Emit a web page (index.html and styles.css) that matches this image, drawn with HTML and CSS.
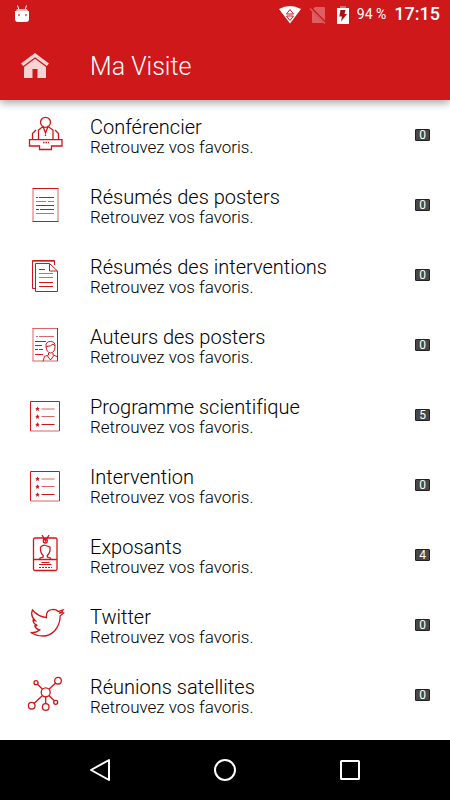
FILE: index.html
```html
<!DOCTYPE html>
<html lang="fr">
<head>
<meta charset="utf-8">
<meta name="viewport" content="width=device-width, initial-scale=1">
<title>Ma Visite</title>
<link rel="stylesheet" href="styles.css">
</head>
<body>
<header class="top">
  <div class="status">
    <svg class="status-bot" width="16" height="20" viewBox="0 0 16 20" aria-hidden="true">
      <path d="M3.500 0.500 5 5M12.500 0.500 11 5" stroke="#fff" stroke-width="1"/>
      <path d="M3 4h10l1.500 3H1.500z" fill="#f4bcbc"/>
      <path d="M1 6h14v8q0 3-3 3H4q-3 0-3-3z" fill="#fff"/>
      <path d="M4 9h2v2H4zM11 9h2v2h-2z" fill="#e57a7a"/>
    </svg>
    <svg width="22" height="20" viewBox="0 0 22 20" aria-hidden="true">
      <path d="M0 4Q11-2 22 4L11 18.500z" fill="#fff"/>
      <path d="M11 4.500 14.500 9H7.500zM7.500 11h7L11 15.500z" fill="#fff" stroke="#ce181a"/>
    </svg>
    <svg class="status-sim" width="18" height="20" viewBox="0 0 18 20" aria-hidden="true">
      <path d="M6 2h9q1 0 1 1v14l-1 1H4q-1 0-1-1V5z" fill="#dd5f61"/>
      <path d="M1 2.500 17 18.500" stroke="#ce181a" stroke-width="3"/>
      <path d="M1 3.500 16 18.500" stroke="#dd5f61" stroke-width="1.500"/>
    </svg>
    <svg class="status-battery" width="14" height="20" viewBox="0 0 14 20" aria-hidden="true">
      <path d="M4 1h6v2H4z" fill="#e06a6c"/>
      <path d="M1 3h12v16H1z" fill="#fff"/>
      <path d="M4.500 5h5L8.500 9H11L5 16.500 6 11.500H3.300z" fill="#a80f12"/>
    </svg>
    <span class="status-percent">94 %</span>
    <span class="status-time">17:15</span>
  </div>
  <div class="bar">
    <button class="home" type="button" aria-label="Accueil">
      <svg width="28" height="26" viewBox="0 0 28 26" aria-hidden="true">
        <path d="M14 0 28 10.500 25.800 13 14 4.200 2.200 13 0 10.500z"/>
        <path d="M14 5.800 25 14v11h-8.500v-9h-5v9H3V14z"/>
      </svg>
    </button>
    <h1>Ma Visite</h1>
  </div>
</header>

<main>
  <ul class="list">
    <li><a class="row" href="#conferencier">
      <svg class="icon" viewBox="0 0 40 40" aria-hidden="true">
        <g class="bold">
        <circle cx="20.500" cy="7.300" r="5"/>
        <path d="M4.500 24.700h32.500v6.300H26.500v3.500h-12V31h-10zM13.500 24.500V15l4.500-3.500 2.500 6.500 2.500-6.500 5 3.500v9.500M7.500 24.500v-6l3.500-3.500M33.500 24.500v-6L30 15"/>
        <path d="M20.500 19.500v2.500M18 27.500h6" stroke-dasharray="1.500 1"/>
        </g>
      </svg>
      <span class="text"><span class="title">Conférencier</span><span class="sub">Retrouvez vos favoris.</span></span>
      <span class="count">0</span></a></li>
    <li><a class="row" href="#resumes-posters">
      <svg class="icon" viewBox="0 0 40 40" aria-hidden="true">
        <path class="soft" d="M8 3.500v33M33 3.500v33"/>
        <path d="M7.500 3.500h26M7.500 36.500h26M11 12.500h2M14 12.500h15M11 20.500h18M11 24.500h3M15 24.500h14"/>
        <path class="soft" d="M11 16.500h10M23 16.500h6M11 28.500h18"/>
      </svg>
      <span class="text"><span class="title">Résumés des posters</span><span class="sub">Retrouvez vos favoris.</span></span>
      <span class="count">0</span></a></li>
    <li><a class="row" href="#resumes-interventions">
      <svg class="icon" viewBox="0 0 40 40" aria-hidden="true">
        <path d="M10.500 33.500h-3v-28h22V10M10.500 8.500h14l8 7.500v20.500h-22zM24.500 8.500V16h8M14 14.500h6M14 27.500h14M14 31.500h14"/>
        <path class="soft" d="M14 18.500h14M14 22.500h14M8 6.500h21"/>
      </svg>
      <span class="text"><span class="title">Résumés des interventions</span><span class="sub">Retrouvez vos favoris.</span></span>
      <span class="count">0</span></a></li>
    <li><a class="row" href="#auteurs">
      <svg class="icon" viewBox="0 0 40 40" aria-hidden="true">
        <path class="soft" d="M8 3v33M7.500 36h25.500M7.500 3.500h25.500M11 11.500h2M14 11.500h15"/>
        <path d="M32.500 3v33M10 16.500h11M10 20.500h7M10 24.500h3M14 24.500h4M10 29.500h8"/>
        <path d="M21 21.500q-.5-5 4.500-5t4.500 5q0 6-4.500 6.500-4-.5-4.500-6.500zM21 21.500q5 0 7-2.500l2 2M23.500 28v2l-4 1.500-1.500 5M28 28v2l4 1.500M22.500 31l3 4 3-4"/>
      </svg>
      <span class="text"><span class="title">Auteurs des posters</span><span class="sub">Retrouvez vos favoris.</span></span>
      <span class="count">0</span></a></li>
    <li><a class="row" href="#programme">
      <svg class="icon" viewBox="0 0 40 40" aria-hidden="true">
        <path d="M5.500 36V6.500h29V36"/>
        <path class="soft" d="M5.500 36h29M16.500 14h13M16.500 21.500h13"/>
        <path d="M16.500 29.500h13"/>
        <path class="solid" d="m12.500 11.500.7 1.500 1.500.2-1.100 1.100.3 1.700-1.400-.8-1.400.8.3-1.700-1.100-1.100 1.500-.2zM12.500 19.300l.7 1.500 1.500.2-1.100 1.100.3 1.700-1.400-.8-1.400.8.3-1.700-1.100-1.100 1.500-.2zM12.500 27.200l.7 1.500 1.500.2-1.100 1.100.3 1.700-1.400-.8-1.400.8.3-1.700-1.100-1.100 1.500-.2z"/>
      </svg>
      <span class="text"><span class="title">Programme scientifique</span><span class="sub">Retrouvez vos favoris.</span></span>
      <span class="count">5</span></a></li>
    <li><a class="row" href="#intervention">
      <svg class="icon" viewBox="0 0 40 40" aria-hidden="true">
        <path d="M5.500 36V6.500h29V36"/>
        <path class="soft" d="M5.500 36h29M16.500 14h13M16.500 21.500h13"/>
        <path d="M16.500 29.500h13"/>
        <path class="solid" d="m12.500 11.500.7 1.500 1.500.2-1.100 1.100.3 1.700-1.400-.8-1.400.8.3-1.700-1.100-1.100 1.500-.2zM12.500 19.300l.7 1.500 1.500.2-1.100 1.100.3 1.700-1.400-.8-1.400.8.3-1.700-1.100-1.100 1.500-.2zM12.500 27.200l.7 1.500 1.500.2-1.100 1.100.3 1.700-1.400-.8-1.400.8.3-1.700-1.100-1.100 1.500-.2z"/>
      </svg>
      <span class="text"><span class="title">Intervention</span><span class="sub">Retrouvez vos favoris.</span></span>
      <span class="count">0</span></a></li>
    <li><a class="row" href="#exposants">
      <svg class="icon" viewBox="0 0 40 40" aria-hidden="true">
        <g class="bold">
        <rect x="8.500" y="3" width="23.500" height="32.500" rx="1.500"/>
        <circle cx="20.300" cy="6" r="2"/>
        <path d="M17 0l3.500 6L24 0M8.500 24.500H32"/>
        <path d="M15.500 12q3-2.500 5-1.500l4.500 1.500q.5 6-2.700 8.500v1.500l3 1 .7 1.500M15.500 12q-.5 6 2.700 8.500V22l-3 1-.7 1.500"/>
        </g>
        <path d="M16.500 27.500h8M14 29.500h12.500"/>
        <path d="M14 32.500h13" stroke-dasharray="2 1"/>
      </svg>
      <span class="text"><span class="title">Exposants</span><span class="sub">Retrouvez vos favoris.</span></span>
      <span class="count">4</span></a></li>
    <li><a class="row" href="#twitter">
      <svg class="icon" viewBox="0 0 40 40" aria-hidden="true">
        <g class="bold">
        <path d="M7.500 5Q13 11.500 21.500 12.700 20.500 4.500 28.500 4.300q2.800 0 4.700 2.200L38 5l-1.500 2.500 2.200.5-3.500 2.800C35 23 27 31 18 31 11 31 8 29 5.700 27.500q5.500.500 9-2.500-4-1-5-4.200l2.600-.3Q8.300 19 8 15.300l2.300.4Q5 11 7.500 5z"/>
        <path d="M33 6.500l3.500 1-2.500 1"/>
        </g>
      </svg>
      <span class="text"><span class="title">Twitter</span><span class="sub">Retrouvez vos favoris.</span></span>
      <span class="count">0</span></a></li>
    <li><a class="row" href="#reunions">
      <svg class="icon" viewBox="0 0 40 40" aria-hidden="true">
        <g class="bold">
        <circle cx="20.700" cy="17.300" r="4.500"/><circle cx="33" cy="5.700" r="3.300"/><circle cx="11" cy="7.700" r="2"/><circle cx="6.700" cy="30.700" r="3.300"/><circle cx="20.700" cy="32" r="3.300"/><circle cx="30.700" cy="27.300" r="2"/>
        <path d="M24 14.200 30.600 8M12.500 9.200l5 5M17.500 20.500l-8.400 8M20.700 22v6.700M24 20.500l5.200 5.300"/>
        </g>
      </svg>
      <span class="text"><span class="title">Réunions satellites</span><span class="sub">Retrouvez vos favoris.</span></span>
      <span class="count">0</span></a></li>
  </ul>
</main>

<nav class="system" aria-label="Navigation">
  <button type="button" aria-label="Retour"><svg width="24" height="24" viewBox="0 0 24 24" aria-hidden="true"><path d="M21 2v20L3 12z"/></svg></button>
  <button type="button" aria-label="Écran d'accueil"><svg width="24" height="24" viewBox="0 0 24 24" aria-hidden="true"><circle cx="12" cy="12" r="10"/></svg></button>
  <button type="button" aria-label="Applications récentes"><svg width="24" height="24" viewBox="0 0 24 24" aria-hidden="true"><rect x="3" y="3" width="18" height="18" rx="0.500"/></svg></button>
</nav>
</body>
</html>
```
FILE: styles.css
```css
* {
  box-sizing: border-box;
}

body {
  margin: 0;
  min-height: 100vh;
  display: flex;
  flex-direction: column;
  background: #fff;
  color: #000;
  font-family: Roboto, "Liberation Sans", sans-serif;
  font-variant-ligatures: none;
}

button {
  padding: 0;
  border: 0;
  background: none;
  display: flex;
  align-items: center;
  justify-content: center;
}

.top {
  position: relative;
  background: #ce181a;
  color: #fff;
  box-shadow: 0 3px 8px rgba(0, 0, 0, 0.35);
}

.status {
  height: 30px;
  padding: 0 10px 0 14px;
  display: flex;
  align-items: center;
}

.status-bot {
  margin-right: auto;
}

.status-sim {
  margin-left: 8px;
}

.status-battery {
  margin: 0 7px 0 9px;
}

.status-percent {
  font-size: 14px;
  line-height: 20px;
  padding-bottom: 2px;
}

.status-time {
  margin-left: 8px;
  font-size: 18px;
  line-height: 20px;
  padding-bottom: 2px;
  font-weight: 500;
}

.bar {
  height: 70px;
  padding: 2px 20px 0;
  display: flex;
  align-items: center;
}

.home {
  width: 30px;
  height: 30px;
  margin-right: 40px;
  fill: #f8d3d4;
}

h1 {
  margin: 0;
  font-size: 25px;
  font-weight: 300;
}

main {
  flex: 1;
}

.list {
  margin: 0;
  padding: 0 0 10px;
  list-style: none;
}

.row {
  height: 70px;
  padding: 0 20px 0 25px;
  display: flex;
  align-items: center;
  color: inherit;
  text-decoration: none;
}

.icon {
  width: 40px;
  height: 40px;
  margin-right: 25px;
  fill: none;
  stroke: #cf1518;
  stroke-width: 1;
}

.icon .soft {
  stroke: #de6567;
}

.icon .bold {
  stroke-width: 1.3;
}

.icon .solid {
  fill: #cf1518;
  stroke: none;
}

.text {
  flex: 1;
  padding-top: 4px;
  display: flex;
  flex-direction: column;
  font-weight: 300;
}

.title {
  font-size: 20px;
  line-height: 20px;
}

.sub {
  font-size: 17px;
  line-height: 20px;
}

.count {
  width: 15px;
  height: 12px;
  border: 1px solid #222;
  border-radius: 1px;
  background: #484848;
  color: #fff;
  font-size: 12px;
  line-height: 10px;
  text-align: center;
}

.system {
  height: 60px;
  padding: 0 38px;
  display: flex;
  align-items: center;
  background: #000;
}

.system button {
  flex: 1;
  height: 60px;
}

.system svg {
  fill: none;
  stroke: #fff;
  stroke-width: 2;
  stroke-linejoin: round;
}
```
